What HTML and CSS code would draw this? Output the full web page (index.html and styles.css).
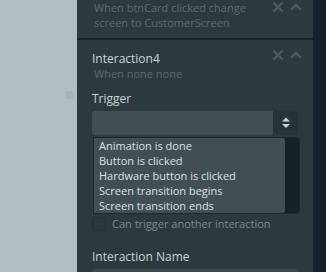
FILE: index.html
```html
<!DOCTYPE html>
<html lang="en">
<head>
    <meta charset="UTF-8">
    <meta name="viewport" content="width=device-width, initial-scale=1.0">
    <title>Interactions</title>
    <link rel="stylesheet" href="styles.css">
</head>
<body>
    <div class="app">
        <div class="canvas">
            <span class="handle"></span>
        </div>

        <div class="panel">
            <div class="card card-prev">
                <div class="card-head">
                    <div class="card-info">
                        <p class="summary">When btnCard clicked change<br>screen to CustomerScreen</p>
                    </div>
                    <div class="card-tools">
                        <svg class="tool" width="12" height="12" viewBox="0 0 12 12"><path d="M1.5 1.5 L10.5 10.5 M10.5 1.5 L1.5 10.5" stroke="currentColor" stroke-width="2.4" fill="none"/></svg>
                        <svg class="tool caret" width="12" height="8" viewBox="0 0 12 8"><path d="M1 7 L6 2 L11 7" stroke="currentColor" stroke-width="2.4" fill="none"/></svg>
                    </div>
                </div>
            </div>

            <div class="card card-open">
                <div class="card-head">
                    <div class="card-info">
                        <h3 class="title">Interaction4</h3>
                        <p class="summary">When none none</p>
                    </div>
                    <div class="card-tools">
                        <svg class="tool" width="12" height="12" viewBox="0 0 12 12"><path d="M1.5 1.5 L10.5 10.5 M10.5 1.5 L1.5 10.5" stroke="currentColor" stroke-width="2.4" fill="none"/></svg>
                        <svg class="tool caret" width="12" height="8" viewBox="0 0 12 8"><path d="M1 7 L6 2 L11 7" stroke="currentColor" stroke-width="2.4" fill="none"/></svg>
                    </div>
                </div>

                <div class="field">
                    <label class="field-label">Trigger</label>
                    <div class="select">
                        <div class="select-value"></div>
                        <div class="select-btn">
                            <svg width="10" height="12" viewBox="0 0 10 12"><path d="M1 4.5 L5 0.5 L9 4.5 Z M1 7 L5 11 L9 7 Z" fill="#c9d3d7"/></svg>
                        </div>
                    </div>
                    <ul class="menu">
                        <li>Animation is done</li>
                        <li>Button is clicked</li>
                        <li>Hardware button is clicked</li>
                        <li>Screen transition begins</li>
                        <li>Screen transition ends</li>
                    </ul>
                </div>

                <div class="check-row">
                    <span class="checkbox"></span>
                    <span class="check-text">Can trigger another interaction</span>
                </div>

                <div class="field field-name">
                    <label class="field-label">Interaction Name</label>
                    <div class="input"></div>
                </div>
            </div>
        </div>

        <div class="rail"></div>
    </div>
</body>
</html>
```

FILE: styles.css
```css
body {
    margin: 0;
    font-family: "Open Sans", "Noto Sans", sans-serif;
    font-size: 11px;
    overflow: hidden;
}
.app {
    display: flex;
    height: 272px;
    overflow: hidden;
}
.canvas {
    width: 77px;
    flex-shrink: 0;
    background: #b0bec4;
    position: relative;
}
.handle {
    position: absolute;
    left: 65px;
    top: 91px;
    width: 8px;
    height: 8px;
    border-radius: 3px 3px 0 0;
    background: #a6b4ba;
}
.panel {
    width: 236px;
    flex-shrink: 0;
    background: #2c3a40;
    overflow: hidden;
}
.rail {
    flex: 1;
    background: #13212a;
}
.card {
    padding: 0 15px;
}
.card-prev {
    height: 38px;
    border-bottom: 2px solid #1a252a;
}
.card-open {
    padding-top: 11px;
}
.card-head {
    display: flex;
    justify-content: space-between;
}
.card-info {
    min-width: 0;
}
.title {
    margin: 0;
    font-size: 12px;
    font-weight: normal;
    line-height: 15px;
    color: #cbd6dc;
}
.summary {
    margin: 0;
    padding-left: 2px;
    line-height: 15px;
    font-size: 11px;
    color: #5a6a71;
    white-space: nowrap;
}
.card-tools {
    display: flex;
    align-items: flex-start;
    gap: 6px;
    padding-top: 1px;
    margin-right: -4px;
    color: #4a5a62;
}
.card-open .card-tools {
    padding-top: 0;
    margin-top: -2px;
}
.tool.caret {
    margin-top: 2px;
}
.field {
    margin-top: 10px;
}
.field-label {
    display: block;
    font-size: 12px;
    line-height: 15px;
    color: #c6d3da;
    margin-bottom: 5px;
}
.select {
    display: flex;
    height: 24px;
    width: 206px;
    border-radius: 3px;
    overflow: hidden;
}
.select-value {
    flex: 1;
    background: #414e54;
}
.select-btn {
    width: 25px;
    background: #283338;
    display: flex;
    align-items: center;
    justify-content: center;
}
.menu {
    list-style: none;
    margin: 2px 0 0 1px;
    padding: 0 14px 0 0;
    width: 191px;
    border: 1px solid #1e292e;
    border-radius: 0 3px 3px 0;
    background: #414e54;
    box-shadow: inset -14px 0 0 #152228;
}
.menu li {
    line-height: 15px;
    padding-left: 5px;
    color: #dbe2e5;
    font-size: 11px;
    white-space: nowrap;
}
.check-row {
    display: flex;
    align-items: center;
    gap: 6px;
    margin-top: 2px;
}
.checkbox {
    width: 12px;
    height: 12px;
    border: 1px solid #233036;
    border-radius: 2px;
    background: #2a373d;
}
.check-text {
    color: #7a8990;
    font-size: 11px;
}
.field-name {
    margin-top: 18px;
}
.input {
    height: 24px;
    width: 205px;
    border-radius: 3px;
    background: #3a474d;
}
```
